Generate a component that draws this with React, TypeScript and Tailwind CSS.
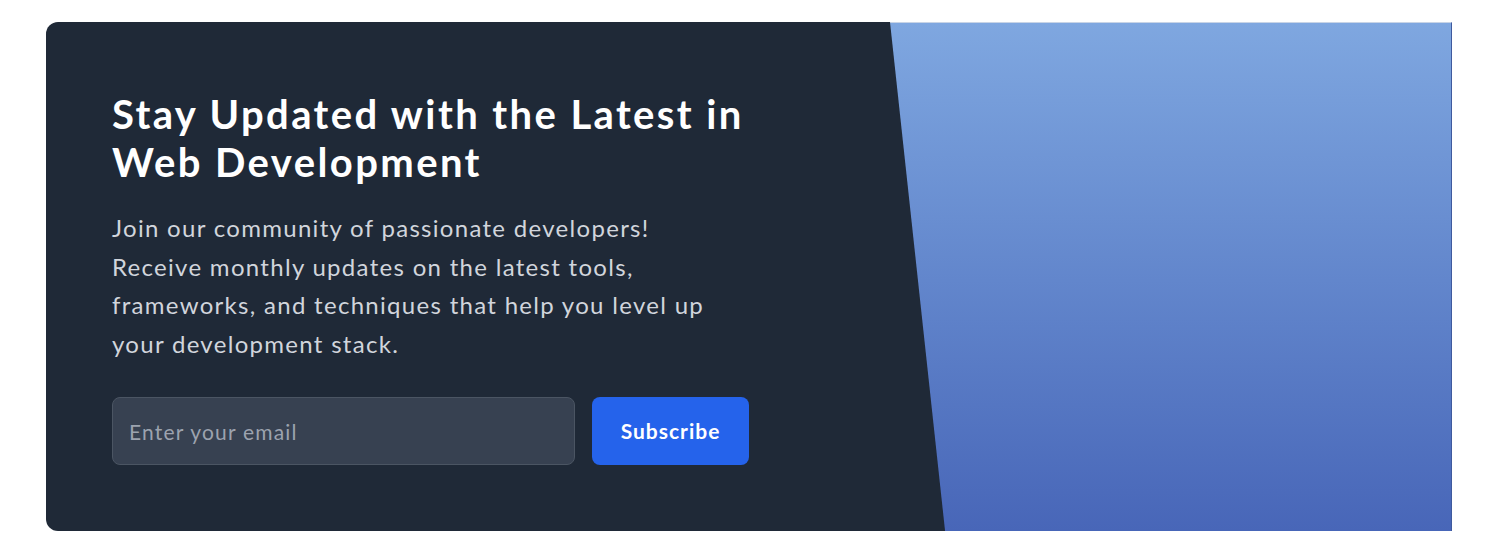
export default function App() {
  return (
    <div className="bg-white w-full h-[557px] pt-[22px] pl-[46px] font-['Lato',sans-serif]">
      <section className="flex w-[1406px] h-[509px] bg-[#1f2937] rounded-l-xl overflow-hidden">
        <div className="flex-1 pl-[66px] pt-[68px]">
          <h2 className="text-[40px] leading-[48px] font-bold text-white tracking-[2.4px]">
            Stay Updated with the Latest in
            <br />
            Web Development
          </h2>
          <p className="mt-[23px] text-[24px] leading-[38.5px] text-gray-300 tracking-[1.3px]">
            Join our community of passionate developers!
            <br />
            Receive monthly updates on the latest tools,
            <br />
            frameworks, and techniques that help you level up
            <br />
            your development stack.
          </p>
          <form className="mt-[34px] flex gap-[17px]" onSubmit={e => e.preventDefault()}>
            <input
              type="email"
              placeholder="Enter your email"
              className="w-[463px] h-[68px] px-4 rounded-lg bg-[#374151] border border-[#4b5563] text-[21px] tracking-[1.2px] text-white placeholder:text-[#9ca3af] outline-none"
            />
            <button
              type="submit"
              className="w-[157px] h-[68px] rounded-lg bg-[#2563eb] text-white text-[21px] tracking-[1px] font-bold"
            >
              Subscribe
            </button>
          </form>
        </div>
        <div className="w-[562px] h-full border-t border-[#c8d4e6] border-r border-r-[#3f5a9e] bg-gradient-to-b from-[#7fa7e0] to-[#4866b8] [clip-path:polygon(0_0,100%_0,100%_100%,9.8%_100%)]" />
      </section>
    </div>
  )
}
